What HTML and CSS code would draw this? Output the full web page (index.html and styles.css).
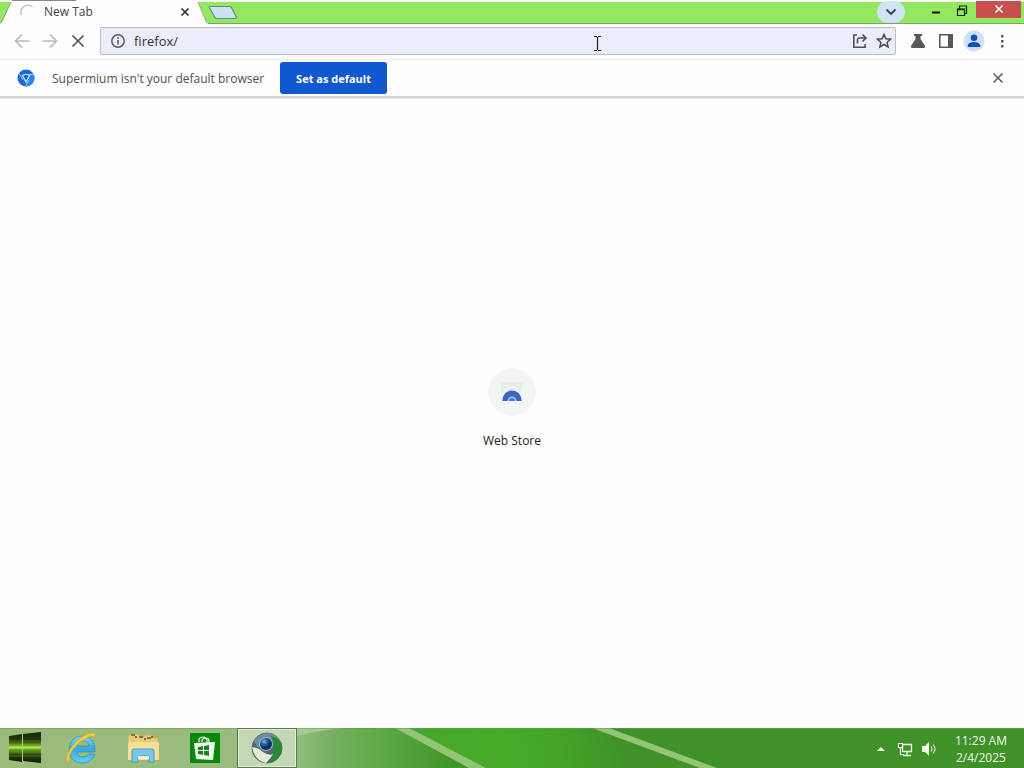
FILE: index.html
```html
<!DOCTYPE html>
<html lang="en">
<head>
<meta charset="utf-8">
<title>New Tab</title>
<link rel="stylesheet" href="styles.css">
</head>
<body>
<div class="desktop">
  <header class="titlebar">
    <div class="tab">
      <svg class="tab-shape" width="208" height="24" viewBox="0 0 208 24"><path d="M0 24 L2 22 L11 2 Q12 0 14 0 H196 Q198 0 199 3 L207 22 L208 24Z" fill="#fefefe"/><path d="M1 23 L11 2M198 2 L207 23" fill="none" stroke="#8a9c86"/><path d="M12 .5H76" stroke="#888"/></svg>
      <svg class="spinner" width="16" height="16" viewBox="0 0 16 16"><path d="M1.500 11A7 7 0 0 1 12.500 3" fill="none" stroke="#c6cbd2" stroke-width="1.600"/></svg>
      <span class="tab-title">New Tab</span>
      <button class="tab-close" aria-label="Close tab"><svg width="10" height="10" viewBox="0 0 10 10"><path d="M1.500 1.500l7 7M8.500 1.500l-7 7" stroke="#333" stroke-width="1.700"/></svg></button>
    </div>
    <button class="new-tab" aria-label="New tab"><svg width="30" height="15" viewBox="0 0 30 15"><path d="M2 1.500H22Q23 1.500 23.500 2.500L28.500 12.500Q28.500 13.500 27.500 13.500H9Q7.500 13.500 7 12.500L1.500 3Q1 1.500 2 1.500Z" fill="#c8e3ef" stroke="#688c84" stroke-width="1.200"/></svg></button>
    <div class="caption">
      <button class="tab-search" aria-label="Search tabs"><svg width="12" height="8" viewBox="0 0 12 8"><path d="M1.500 1.500L6 6l4.500-4.500" fill="none" stroke="#34414c" stroke-width="1.800"/></svg></button>
      <button class="win-button minimize" aria-label="Minimize"><svg width="12" height="12" viewBox="0 0 12 12"><path d="M2 7.500h8" stroke="#111" stroke-width="2"/></svg></button>
      <button class="win-button" aria-label="Restore"><svg width="12" height="12" viewBox="0 0 12 12"><path d="M1.500 4h7v6.500h-7zM3.500 3.500V1h7v7.500H9" fill="none" stroke="#18250f" stroke-width="1.200"/><path d="M1 4.500h8" stroke="#18250f" stroke-width="1.500"/></svg></button>
      <button class="win-button window-close" aria-label="Close"><svg width="10" height="10" viewBox="0 0 10 10"><path d="M1.500 1.500l7 7M8.500 1.500l-7 7" stroke="#fff" stroke-width="1.600"/></svg></button>
    </div>
  </header>

  <nav class="toolbar">
    <button class="tool" aria-label="Back"><svg width="16" height="16" viewBox="0 0 16 16"><path d="M15.500 8H2M8 1.500L1.500 8 8 14.500" fill="none" stroke="#b7b9bb" stroke-width="1.700"/></svg></button>
    <button class="tool" aria-label="Forward"><svg width="16" height="16" viewBox="0 0 16 16"><path d="M.5 8H14M8 1.500L14.500 8 8 14.500" fill="none" stroke="#b7b9bb" stroke-width="1.700"/></svg></button>
    <button class="tool" aria-label="Stop"><svg width="14" height="14" viewBox="0 0 14 14"><path d="M1.500 1.500l11 11M12.500 1.500l-11 11" stroke="#505356" stroke-width="1.700"/></svg></button>
    <div class="omnibox">
      <button class="box-button" aria-label="Site information"><svg width="16" height="16" viewBox="0 0 16 16"><circle cx="8" cy="8" r="6.200" fill="none" stroke="#585c62" stroke-width="1.500"/><path d="M8 7v4.500M8 4.300V6" stroke="#585c62" stroke-width="1.600"/></svg></button>
      <input class="address" type="text" value="firefox/" aria-label="Address">
      <svg class="text-cursor" width="9" height="17" viewBox="0 0 9 17"><path d="M1 1.500h3M5 1.500h3M1 15.500h3M5 15.500h3M4.500 2v13" stroke="#222" stroke-width="1.200"/></svg>
      <button class="box-button" aria-label="Share"><svg width="16" height="16" viewBox="0 0 16 16"><path d="M5 2H1.800V14.200H13.200V11" fill="none" stroke="#4c5056" stroke-width="1.600"/><path d="M5.500 10.500V7Q5.500 5 7.500 5H13.500M10.500 1.500L14 5l-3.500 3.500" fill="none" stroke="#4c5056" stroke-width="1.600"/></svg></button>
      <button class="box-button" aria-label="Bookmark"><svg width="16" height="16" viewBox="0 0 16 16"><path d="M8 1.500l1.900 4.300 4.700.4-3.500 3.100 1 4.700L8 11.500 3.900 14l1-4.700L1.400 6.200l4.700-.4z" fill="none" stroke="#464a50" stroke-width="1.500"/></svg></button>
    </div>
    <div class="tool-group">
      <button class="tool" aria-label="Experiments"><svg width="16" height="16" viewBox="0 0 16 16"><path d="M4 1h8v2h-1.500v3L15 13q.5 1.500-1 2H2q-1.500-.5-1-2l4.500-7V3H4z" fill="#55595c"/></svg></button>
      <button class="tool" aria-label="Side panel"><svg width="16" height="16" viewBox="0 0 16 16"><path d="M1.800 1.800h12.400v12.400H1.800z" fill="#fff" stroke="#55595c" stroke-width="1.600"/><path d="M10 2h4v12h-4z" fill="#55595c"/></svg></button>
      <button class="tool" aria-label="Profile"><svg width="22" height="22" viewBox="0 0 22 22"><circle cx="11" cy="11" r="10.500" fill="#cfe0fb"/><circle cx="11" cy="7.700" r="3.300" fill="#1050b8"/><path d="M4.700 17v-1.500q.8-3.500 6.300-3.500t6.300 3.500V17z" fill="#1050b8"/></svg></button>
      <button class="tool" aria-label="Menu"><svg width="4" height="16" viewBox="0 0 4 16"><path d="M1 2h2.500v2.500H1zM1 7h2.500v2.500H1zM1 12h2.500v2.500H1z" fill="#55595c"/></svg></button>
    </div>
  </nav>

  <section class="infobar">
    <svg width="18" height="18" viewBox="0 0 18 18"><circle cx="9" cy="9" r="8.500" fill="#176bd1"/><path d="M9 5.500H16.700A8.500 8.500 0 0 1 9 17.500L12 10.700z" fill="#2588ee"/><path d="M9 5.500h7.700M6 10.800L2.200 4.500M12 10.800L8.500 17.400" stroke="#a9d0ff" stroke-width=".9"/><path d="M5.500 6.500Q9 4.500 12.500 6.500L9 13z" fill="#1460c8" stroke="#d8eaff" stroke-width="1.200"/></svg>
    <span class="info-text">Supermium isn't your default browser</span>
    <button class="default-button">Set as default</button>
    <button class="info-close" aria-label="Dismiss"><svg width="12" height="12" viewBox="0 0 12 12"><path d="M1.500 1.500l9 9M10.500 1.500l-9 9" stroke="#55595c" stroke-width="1.500"/></svg></button>
  </section>

  <main class="content">
    <a class="shortcut" href="#">
      <span class="shortcut-icon"><svg width="24" height="24" viewBox="0 0 24 24"><path d="M1 2h22l-2 9-5-4H8l-5 4-2 4z" fill="#e9edec"/><path d="M2 22v-4a10 9 0 0 1 20 0v4z" fill="#e1edfb"/><path d="M2.500 20A9.500 9.500 0 0 1 21.500 20v1H2.500z" fill="#4164c4"/><path d="M7.500 21a4.500 4.500 0 0 1 9 0z" fill="#aac4f6"/><path d="M9 21a3 3 0 0 1 6 0z" fill="#4e7edc"/><path d="M2 21h20v3H2z" fill="#f0f4f5"/></svg></span>
      <span>Web Store</span>
    </a>
  </main>

  <footer class="taskbar">
    <svg class="wallpaper" viewBox="0 0 1024 40" preserveAspectRatio="none">
      <defs>
        <linearGradient id="base"><stop offset="0" stop-color="#9bbb7b"/><stop offset=".2" stop-color="#9abb80"/><stop offset=".29" stop-color="#91bd7d"/><stop offset=".32" stop-color="#78b063"/><stop offset=".37" stop-color="#5eaa47"/><stop offset=".44" stop-color="#409527"/></linearGradient>
        <linearGradient id="bright" gradientUnits="userSpaceOnUse" x1="405" y1="40" x2="620" y2="0"><stop offset="0" stop-color="#46a62b"/><stop offset=".45" stop-color="#45ac27"/><stop offset=".7" stop-color="#43a527"/><stop offset="1" stop-color="#409127"/></linearGradient>
      </defs>
      <path d="M0 0h1024v40H0z" fill="url(#base)"/>
      <path d="M405 0h619v40H480z" fill="url(#bright)"/>
      <path d="M297 8Q320 2 345 0h-48z" fill="#a8ca96"/>
      <path d="M395 0h14l77 40h-17zM592 0h17l108 40h-17z" fill="#94c477"/>
      <path d="M0 .5h1024" stroke="#6b9c50" opacity=".55"/>
    </svg>
    <button class="task start" aria-label="Start"><svg width="34" height="34" viewBox="0 0 34 34"><defs><linearGradient id="start" x2="0" y2="1"><stop offset="0" stop-color="#162309"/><stop offset=".3" stop-color="#263e0c"/><stop offset=".43" stop-color="#70b522"/><stop offset=".5" stop-color="#b5e75a"/><stop offset=".57" stop-color="#66a51e"/><stop offset=".75" stop-color="#213d0c"/><stop offset="1" stop-color="#101b08"/></linearGradient></defs><path d="M1 5L14 3v28L1 29zM15 3L33 1v31L15 30z" fill="url(#start)"/><path d="M1 10h32M1 14h32M1 21h32M1 25h32" stroke="#68932b" stroke-width=".6"/><path d="M14.500 3v28" stroke="#b2cc75"/></svg></button>
    <button class="task" aria-label="Internet Explorer"><svg width="34" height="32" viewBox="0 0 34 32"><defs><linearGradient id="ie" x2="0" y2="1"><stop offset="0" stop-color="#83d5ef"/><stop offset=".5" stop-color="#36a9db"/><stop offset="1" stop-color="#64cff2"/></linearGradient></defs><path d="M31 20H13Q14 25 19 25q4 0 6-3h6Q28 31 18.500 31 5 30 5 17.500 6 4 18.500 4 32 5 31 20zM13 14h12Q24 9 19 9t-6 5z" fill="url(#ie)" stroke="#2887ae" stroke-width=".6"/><path d="M5 30C-3 28 10 7 24 2q8-3 7 4-2-4-8 0C14 10 4 20 5 30z" fill="#f3cc37" stroke="#d1a333" stroke-width=".5"/></svg></button>
    <button class="task" aria-label="File Explorer"><svg width="32" height="32" viewBox="0 0 32 32"><path d="M1 5l2-3h8l2 3h3l2-2h7l2 3h4v22H1z" fill="#e9cc76" stroke="#c7a551" stroke-width=".7"/><path d="M4 2h4v2H4zM12 4h4v2h-4zM20 5h4v2h-4z" fill="#5e873d"/><path d="M8 4h2v2H8zM17 6h2v2h-2zM24 4h2v2h-2z" fill="#c34c34"/><path d="M1 10h31v18H1z" fill="#f8df98"/><path d="M5 30V19q0-2 2-2h18q2 0 2 2v11h-5v-6H11v6z" fill="#75c8e8" stroke="#529ac0"/><path d="M11 24h11v3H11z" fill="#eef2cf"/></svg></button>
    <button class="task" aria-label="Store"><svg width="30" height="30" viewBox="0 0 30 30"><path d="M0 0h30v30H0z" fill="#078a0b"/><path d="M9 9V6q1-2 4-2t4 3v3M12 9V7q1-2 4-2t3 3v2" fill="none" stroke="#efffeb" stroke-width="1.200"/><path d="M4 10l21-1-2 18-17-1z" fill="#f5fff1"/><path d="M8 14l5-1v4H8zM14 13l5-1v5h-5zM8 18h5v4l-5-1zM14 18h5v5l-5-1z" fill="#16851a"/></svg></button>
    <button class="task active" aria-label="Supermium"><svg width="32" height="32" viewBox="0 0 32 32"><defs><radialGradient id="orb" cx=".35" cy=".3"><stop offset="0" stop-color="#8cc3ed"/><stop offset=".4" stop-color="#2e70ad"/><stop offset="1" stop-color="#092f65"/></radialGradient></defs><circle cx="16" cy="16" r="15" fill="#4f6c78" stroke="#536968"/><path d="M3 9Q8 1 17 1q9 1 13 9l-15-2-8 8z" fill="#708da1"/><path d="M20 4Q30 6 31 16q-1 12-13 15 9-14 2-27z" fill="#258b33"/><path d="M1 15q7 1 11 5 6 4 10 2-2 4-7 9Q3 28 1 15z" fill="#e8ebd4"/><circle cx="15" cy="12" r="7" fill="#9eb5c0"/><circle cx="15" cy="12" r="6" fill="url(#orb)"/></svg></button>
    <div class="tray">
      <button class="tray-button" aria-label="Show hidden icons"><svg width="8" height="5" viewBox="0 0 8 5"><path d="M0 5l4-4 4 4z" fill="#eefbe9"/></svg></button>
      <button class="tray-button" aria-label="Network"><svg width="16" height="16" viewBox="0 0 16 16"><path d="M5.500 3.500h9v7h-9zM10 11v3M6 14.500h8" fill="none" stroke="#eefbe9" stroke-width="1.300"/><path d="M1.500 2.500h4v4h-4zM3.500 7v6.500h3" fill="#397a27" stroke="#eefbe9" stroke-width="1.200"/></svg></button>
      <button class="tray-button" aria-label="Volume"><svg width="16" height="16" viewBox="0 0 16 16"><path d="M1 5h3l4-4v14l-4-4H1z" fill="#eefbe9"/><path d="M10 5.500q2 2.500 0 5M12 3.500q4 4.500 0 9" fill="none" stroke="#dff1d8" stroke-width="1.100"/></svg></button>
      <time class="clock" datetime="2025-02-04T11:29"><span>11:29 AM</span><span>2/4/2025</span></time>
    </div>
  </footer>
</div>
</body>
</html>
```
FILE: styles.css
```css
* { box-sizing: border-box; }
body { margin: 0; font-family: "Open Sans", "Noto Sans", sans-serif; font-size: 12px; color: #333; }
button { display: flex; align-items: center; justify-content: center; flex: none; margin: 0; padding: 0; border: 0; background: none; font: inherit; color: inherit; }
svg { display: block; flex: none; }
.desktop { display: flex; flex-direction: column; min-height: 100vh; background: #fefefe; }

.titlebar { display: flex; height: 24px; background: #92e85e; border-top: 2px solid #f8fcf5; box-shadow: inset 0 -1px #7aa568; }
.tab { position: relative; display: flex; align-items: center; width: 208px; height: 24px; margin-top: -2px; padding: 0 17px 0 20px; }
.tab-shape { position: absolute; inset: 0; }
.spinner, .tab-title, .tab-close { position: relative; }
.tab-title { flex: 1; padding-left: 8px; padding-bottom: 2px; color: #454545; }
.tab-close { width: 12px; height: 16px; }
.new-tab { height: 20px; }
.caption { display: flex; margin-left: auto; height: 20px; }
.tab-search { width: 28px; height: 22px; border-radius: 11px; background: #cfe3f5; margin-top: -1px; margin-right: 18px; }
.win-button { width: 26px; height: 17px; }
.window-close { width: 45px; height: 17px; margin-top: -1px; margin-left: 1px; margin-right: 3px; padding-bottom: 1px; background: #c94f4c; }

.toolbar { display: flex; align-items: center; height: 36px; padding: 0 8px 1px; border-bottom: 1px solid #ececee; }
.tool { width: 28px; height: 28px; }
.omnibox { position: relative; display: flex; align-items: center; flex: 1; height: 28px; margin-left: 8px; padding: 0 3px 0 9px; border: 1px solid #bcbcc5; border-radius: 2px; background: #e9eefa; gap: 8px; }
.box-button { width: 16px; height: 24px; }
.address { flex: 1; min-width: 0; padding: 0; border: 0; outline: 0; background: none; font: inherit; font-size: 13px; color: #333; }
.text-cursor { position: absolute; left: 62%; top: 7px; }
.tool-group { display: flex; margin-left: 8px; }

.infobar { display: flex; align-items: center; height: 38px; padding: 0 20px 0 17px; border-bottom: 2px solid #d4d4d4; box-shadow: 0 1px 1px #ececec; }
.info-text { margin-left: 17px; margin-right: 16px; color: #505050; }
.default-button { height: 32px; padding: 0 16px; border-radius: 3px; background: #1058d0; color: #fff; font-size: 11px; font-weight: 700; }
.info-close { margin-left: auto; }

.content { flex: 1; display: flex; align-items: center; justify-content: center; }
.shortcut { display: flex; flex-direction: column; align-items: center; gap: 16px; margin-bottom: 10px; color: #222; text-decoration: none; }
.shortcut-icon { display: flex; align-items: center; justify-content: center; width: 48px; height: 48px; border-radius: 50%; background: #f3f5f5; }

.taskbar { position: relative; display: flex; height: 40px; gap: 2px; overflow: hidden; }
.wallpaper { position: absolute; inset: 0; width: 100%; height: 100%; }
.task { position: relative; width: 60px; height: 40px; }
.task.start { width: 49px; }
.task.active { border: 1px solid #60764f; background: #c4d8b5; box-shadow: inset 0 0 0 1px #e3eed8; }
.tray { position: relative; display: flex; align-items: center; gap: 8px; margin-left: auto; padding-right: 17px; padding-top: 1px; color: #f0faec; }
.tray-button { min-width: 16px; height: 24px; }
.clock { display: flex; flex-direction: column; align-items: center; margin-left: 10px; line-height: 17px; }
```
